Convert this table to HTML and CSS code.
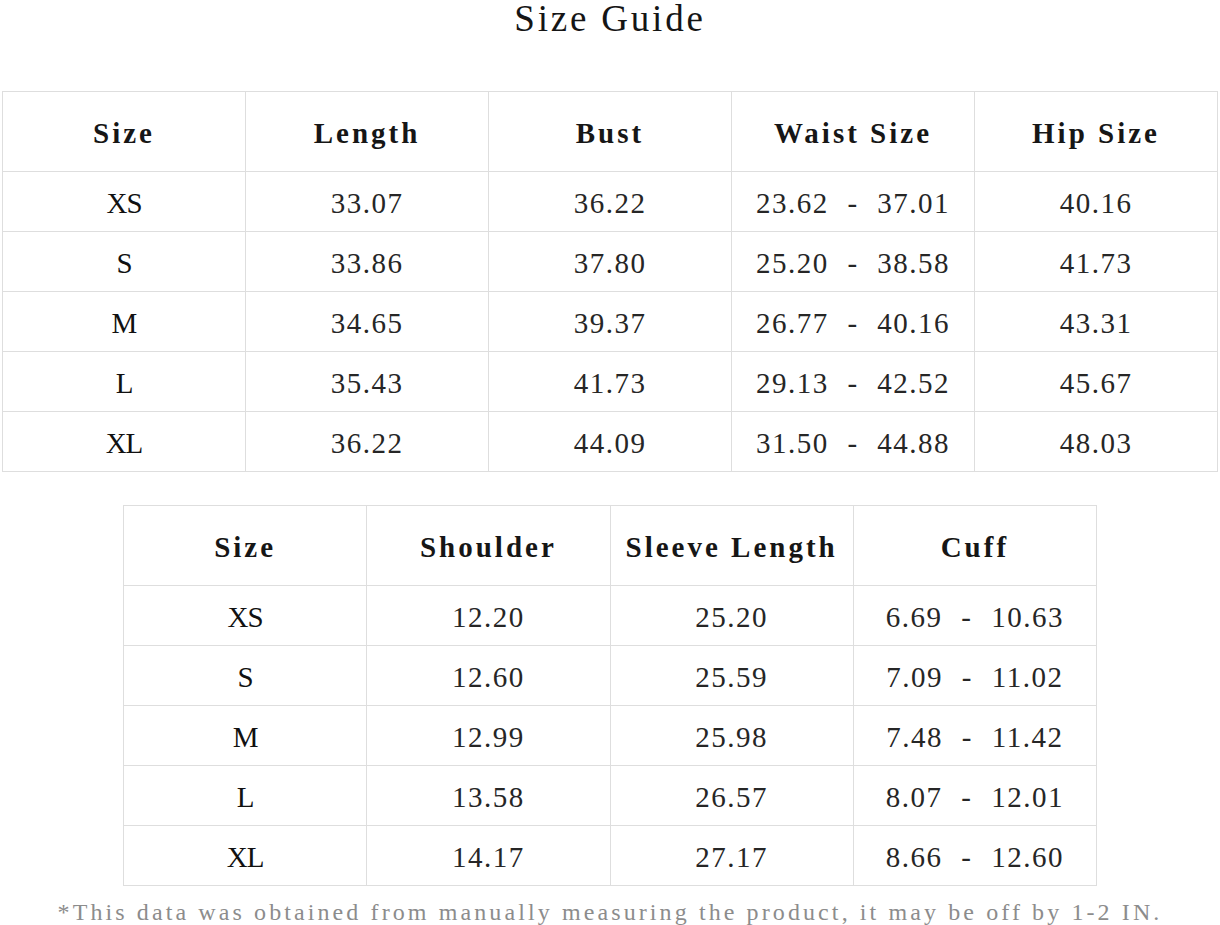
FILE: index.html
```html
<!DOCTYPE html>
<html lang="en">
<head>
<meta charset="utf-8">
<title>Size Guide</title>
<link rel="stylesheet" href="styles.css">
</head>
<body>
<main class="page">
  <h1 class="title">Size Guide</h1>

  <table class="chart chart-main">
    <thead>
      <tr><th>Size</th><th>Length</th><th>Bust</th><th>Waist Size</th><th>Hip Size</th></tr>
    </thead>
    <tbody>
      <tr><td class="size">XS</td><td>33.07</td><td>36.22</td><td class="range">23.62 - 37.01</td><td>40.16</td></tr>
      <tr><td class="size">S</td><td>33.86</td><td>37.80</td><td class="range">25.20 - 38.58</td><td>41.73</td></tr>
      <tr><td class="size">M</td><td>34.65</td><td>39.37</td><td class="range">26.77 - 40.16</td><td>43.31</td></tr>
      <tr><td class="size">L</td><td>35.43</td><td>41.73</td><td class="range">29.13 - 42.52</td><td>45.67</td></tr>
      <tr><td class="size">XL</td><td>36.22</td><td>44.09</td><td class="range">31.50 - 44.88</td><td>48.03</td></tr>
    </tbody>
  </table>

  <table class="chart chart-sleeve">
    <thead>
      <tr><th>Size</th><th>Shoulder</th><th>Sleeve Length</th><th>Cuff</th></tr>
    </thead>
    <tbody>
      <tr><td class="size">XS</td><td>12.20</td><td>25.20</td><td class="range">6.69 - 10.63</td></tr>
      <tr><td class="size">S</td><td>12.60</td><td>25.59</td><td class="range">7.09 - 11.02</td></tr>
      <tr><td class="size">M</td><td>12.99</td><td>25.98</td><td class="range">7.48 - 11.42</td></tr>
      <tr><td class="size">L</td><td>13.58</td><td>26.57</td><td class="range">8.07 - 12.01</td></tr>
      <tr><td class="size">XL</td><td>14.17</td><td>27.17</td><td class="range">8.66 - 12.60</td></tr>
    </tbody>
  </table>

  <p class="note">*This data was obtained from manually measuring the product, it may be off by 1-2 IN.</p>
</main>
</body>
</html>
```

FILE: styles.css
```css
html, body {
  margin: 0;
  padding: 0;
  background: #ffffff;
}

.page {
  width: 1220px;
  display: flex;
  flex-direction: column;
  align-items: center;
}

.title {
  margin: 0;
  height: 40px;
  line-height: 38px;
  font-family: "Liberation Serif", serif;
  font-size: 37px;
  font-weight: normal;
  letter-spacing: 2.8px;
  color: #151515;
  text-align: center;
}

.chart {
  border-collapse: collapse;
  table-layout: fixed;
}

.chart-main {
  margin-top: 51px;
  width: 1216px;
}

.chart-sleeve {
  margin-top: 33px;
  width: 974px;
}

.chart th,
.chart td {
  border: 1px solid #dedede;
  text-align: center;
  vertical-align: middle;
  padding: 0;
}

.chart th {
  height: 75px;
  padding-top: 4px;
  font-family: "Liberation Serif", serif;
  font-size: 29px;
  font-weight: bold;
  letter-spacing: 3px;
  color: #161616;
}

.chart td {
  height: 56px;
  padding-top: 3px;
  font-family: "Liberation Serif", serif;
  font-size: 29px;
  letter-spacing: 1.5px;
  color: #262626;
}

.chart td.range {
  word-spacing: 10px;
}

.chart td.size {
  color: #111111;
  letter-spacing: -1px;
}

.note {
  margin: 12px 0 0;
  font-family: "Liberation Serif", serif;
  font-size: 24px;
  letter-spacing: 3.1px;
  color: #8c8c8c;
  text-align: center;
  line-height: 28px;
}
```
